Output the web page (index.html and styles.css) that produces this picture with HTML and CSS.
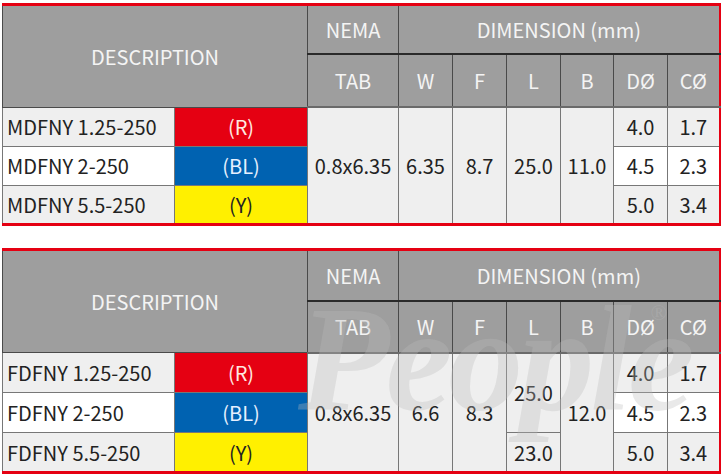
FILE: index.html
```html
<!DOCTYPE html>
<html>
<head>
<meta charset="utf-8">
<link rel="stylesheet" href="styles.css">
</head>
<body>
<div class="page">
  <table class="spec">
    <colgroup>
      <col class="c-desc"><col class="c-color"><col class="c-nema">
      <col class="c-w"><col class="c-f"><col class="c-l"><col class="c-b"><col class="c-d"><col class="c-c">
    </colgroup>
    <tr class="h1">
      <th colspan="2" rowspan="2">DESCRIPTION</th>
      <th>NEMA</th>
      <th colspan="6">DIMENSION (mm)</th>
    </tr>
    <tr class="h2">
      <th>TAB</th><th>W</th><th>F</th><th>L</th><th>B</th><th>DØ</th><th>CØ</th>
    </tr>
    <tr class="r">
      <td class="name">MDFNY 1.25-250</td>
      <td class="red">(R)</td>
      <td rowspan="3">0.8x6.35</td>
      <td rowspan="3">6.35</td>
      <td rowspan="3">8.7</td>
      <td rowspan="3">25.0</td>
      <td rowspan="3">11.0</td>
      <td>4.0</td><td>1.7</td>
    </tr>
    <tr class="r">
      <td class="name white">MDFNY 2-250</td>
      <td class="blue">(BL)</td>
      <td class="white">4.5</td><td class="white">2.3</td>
    </tr>
    <tr class="r">
      <td class="name">MDFNY 5.5-250</td>
      <td class="yellow">(Y)</td>
      <td>5.0</td><td>3.4</td>
    </tr>
  </table>

  <div class="wm-wrap">
    <table class="spec second">
      <colgroup>
        <col class="c-desc"><col class="c-color"><col class="c-nema">
        <col class="c-w"><col class="c-f"><col class="c-l"><col class="c-b"><col class="c-d"><col class="c-c">
      </colgroup>
      <tr class="h1">
        <th colspan="2" rowspan="2">DESCRIPTION</th>
        <th>NEMA</th>
        <th colspan="6">DIMENSION (mm)</th>
      </tr>
      <tr class="h2">
        <th>TAB</th><th>W</th><th>F</th><th>L</th><th>B</th><th>DØ</th><th>CØ</th>
      </tr>
      <tr class="r">
        <td class="name">FDFNY 1.25-250</td>
        <td class="red">(R)</td>
        <td rowspan="3">0.8x6.35</td>
        <td rowspan="3">6.6</td>
        <td rowspan="3">8.3</td>
        <td rowspan="2">25.0</td>
        <td rowspan="3">12.0</td>
        <td>4.0</td><td>1.7</td>
      </tr>
      <tr class="r">
        <td class="name white">FDFNY 2-250</td>
        <td class="blue">(BL)</td>
        <td class="white">4.5</td><td class="white">2.3</td>
      </tr>
      <tr class="r">
        <td class="name">FDFNY 5.5-250</td>
        <td class="yellow">(Y)</td>
        <td>23.0</td>
        <td>5.0</td><td>3.4</td>
      </tr>
    </table>
    <div class="watermark">People<span class="reg">®</span></div>
  </div>
</div>
</body>
</html>
```

FILE: styles.css
```css
html, body {
  margin: 0;
  padding: 0;
  background: #ffffff;
}

.page {
  padding: 3px 0 0 2px;
  display: flex;
  flex-direction: column;
  gap: 22px;
  font-family: "Noto Sans CJK JP", "Noto Sans", sans-serif;
}

.spec {
  border-collapse: collapse;
  table-layout: fixed;
  width: 718px;
  border-top: 3px solid #e50012;
  border-bottom: 3px solid #e50012;
  border-right: 2px solid #e50012;
  border-left: 1px solid #d8d8d8;
}

.c-desc { width: 172px; }
.c-color { width: 133px; }
.c-nema { width: 91px; }
.c-w { width: 54px; }
.c-f { width: 54px; }
.c-l { width: 54px; }
.c-b { width: 53px; }
.c-d { width: 54px; }
.c-c { width: 52px; }

.spec th {
  background: #9e9e9e;
  color: #f4f4f4;
  font-weight: 400;
  font-size: 20px;
  padding: 0;
  border: 1px solid #4a4a4a;
  text-align: center;
  vertical-align: middle;
}

.spec .h1 th { height: 47px; }
.spec .h2 th { height: 51px; border-top: 2px solid #2a2a2a; }
.spec .h2 th { border-bottom: 2px solid #6a6a6a; }

.spec .r { height: 39px; }

.spec td {
  background: #efefef;
  color: #222;
  font-size: 20px;
  padding: 0;
  border: 1px solid #777;
  text-align: center;
  vertical-align: middle;
}

.spec td.name {
  text-align: left;
  padding-left: 4px;
  white-space: nowrap;
}

.spec td.white { background: #ffffff; }
.spec td.red { background: #e50012; color: #ffe9e0; }
.spec td.blue { background: #0062b1; color: #e6f0ff; }
.spec td.yellow { background: #fff000; color: #222; }

.second .h1 th { height: 49px; }
.second .h2 th { height: 50px; }
.second .r { height: 40px; }

.wm-wrap {
  position: relative;
}

.watermark {
  position: absolute;
  left: 296px;
  top: 36px;
  font-family: "Liberation Serif", serif;
  font-style: italic;
  font-weight: 700;
  font-size: 150px;
  line-height: 1;
  color: rgba(187, 187, 187, 0.32);
  letter-spacing: -4px;
  pointer-events: none;
  white-space: nowrap;
}

.watermark .reg {
  font-size: 22px;
  font-style: normal;
  font-weight: 400;
  vertical-align: 90px;
  margin-left: -40px;
}
```
